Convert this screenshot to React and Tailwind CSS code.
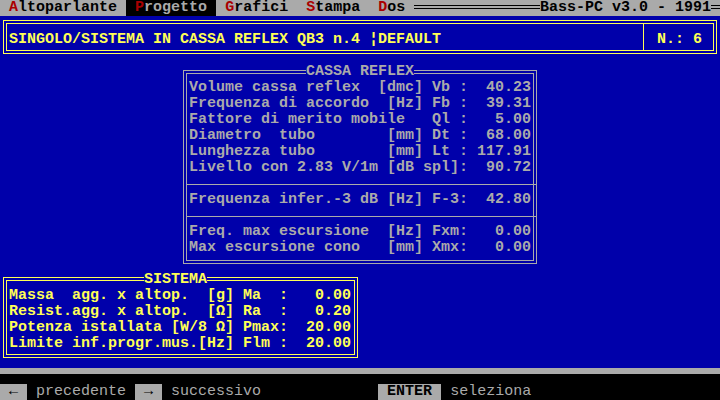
import React from 'react'

const cassaTop = [
  'Volume cassa reflex  [dmc] Vb :  40.23',
  'Frequenza di accordo  [Hz] Fb :  39.31',
  'Fattore di merito mobile   Ql :   5.00',
  'Diametro  tubo        [mm] Dt :  68.00',
  'Lunghezza tubo        [mm] Lt : 117.91',
  'Livello con 2.83 V/1m [dB spl]:  90.72',
]

const cassaBottom = [
  'Freq. max escursione  [Hz] Fxm:   0.00',
  'Max escursione cono   [mm] Xmx:   0.00',
]

const sistema = [
  'Massa  agg. x altop.  [g] Ma  :   0.00',
  'Resist.agg. x altop.  [Ω] Ra  :   0.20',
  'Potenza istallata [W/8 Ω] Pmax:  20.00',
  'Limite inf.progr.mus.[Hz] Flm :  20.00',
]

const DoubleBox = ({ outer, line, title, titlePos, children }) => (
  <div className={`relative border p-[2px] ${line} ${outer}`}>
    <div className={`border h-full ${line}`}>{children}</div>
    {title && (
      <span className={`absolute bg-[#0000aa] whitespace-pre ${titlePos}`}>{title}</span>
    )}
  </div>
)

const Separator = () => (
  <div className="h-4 -mx-[3px] flex items-center">
    <div className="w-full h-px bg-[#aaaaaa]" />
  </div>
)

const MenuItem = ({ first, rest }) => (
  <span>
    <span className="text-[#aa0000]">{first}</span>
    {rest}
  </span>
)

export default function App() {
  return (
    <div className="w-[720px] h-[400px] flex flex-col bg-black overflow-hidden font-['Liberation_Mono','DejaVu_Sans_Mono',monospace] text-[15px] leading-4 font-bold">
      {/* menu bar */}
      <div className="h-4 flex bg-[#aaaaaa] text-black whitespace-pre">
        <span> </span>
        <MenuItem first="A" rest="ltoparlante" />
        <span> </span>
        <span className="bg-black text-[#aaaaaa]">
          {' '}
          <span className="text-[#aa0000]">P</span>
          {'rogetto '}
        </span>
        <span> </span>
        <MenuItem first="G" rest="rafici" />
        <span>{'  '}</span>
        <MenuItem first="S" rest="tampa" />
        <span>{'  '}</span>
        <MenuItem first="D" rest="os" />
        <span> </span>
        <div className="w-[126px] h-[4px] mt-[5px] border-y border-black" />
        <span>Bass-PC v3.0 - 1991</span>
        <div className="w-[9px] h-[4px] mt-[5px] border-y border-black" />
      </div>

      {/* blue workspace */}
      <div className="h-[352px] flex flex-col bg-[#0000aa]">
        <DoubleBox outer="mt-[4px] mx-[3px] h-[34px]" line="border-[#ffff55]">
          <div className="h-full flex text-[#ffff55] whitespace-pre">
            <div className="w-[636px] pl-[2px] pt-[8px]">SINGOLO/SISTEMA IN CASSA REFLEX QB3 n.4 ¦DEFAULT</div>
            <div className="flex-1 border-l border-[#ffff55] pl-[13px] pt-[8px]">N.: 6</div>
          </div>
        </DoubleBox>

        <DoubleBox
          outer="mt-[16px] mx-auto w-[354px] h-[194px]"
          line="border-[#aaaaaa]"
          title="CASSA REFLEX"
          titlePos="top-[-7px] left-[122px] text-[#aaaaaa]"
        >
          <div className="pl-[2px] pt-[6px] text-[#aaaaaa] whitespace-pre">
            {cassaTop.map(l => (
              <div key={l}>{l}</div>
            ))}
            <Separator />
            <div>Frequenza infer.-3 dB [Hz] F-3:  42.80</div>
            <Separator />
            {cassaBottom.map(l => (
              <div key={l}>{l}</div>
            ))}
          </div>
        </DoubleBox>

        <DoubleBox
          outer="mt-[13px] ml-[3px] w-[355px] h-[81px]"
          line="border-[#ffff55]"
          title="SISTEMA"
          titlePos="top-[-6px] left-[140px] text-[#ffff55]"
        >
          <div className="pl-[2px] pt-[7px] text-[#ffff55] whitespace-pre">
            {sistema.map(l => (
              <div key={l}>{l}</div>
            ))}
          </div>
        </DoubleBox>
      </div>

      {/* status bar */}
      <div className="h-[6px] bg-[#aaaaaa]" />
      <div className="h-[10px]" />
      <div className="h-4 flex whitespace-pre text-[#aaaaaa] font-normal">
        <span className="bg-[#aaaaaa] text-black"> ← </span>
        <span> precedente </span>
        <span className="bg-[#aaaaaa] text-black"> → </span>
        <span>{' successivo             '}</span>
        <span className="bg-[#aaaaaa] text-black font-bold"> ENTER </span>
        <span> seleziona</span>
      </div>
    </div>
  )
}
